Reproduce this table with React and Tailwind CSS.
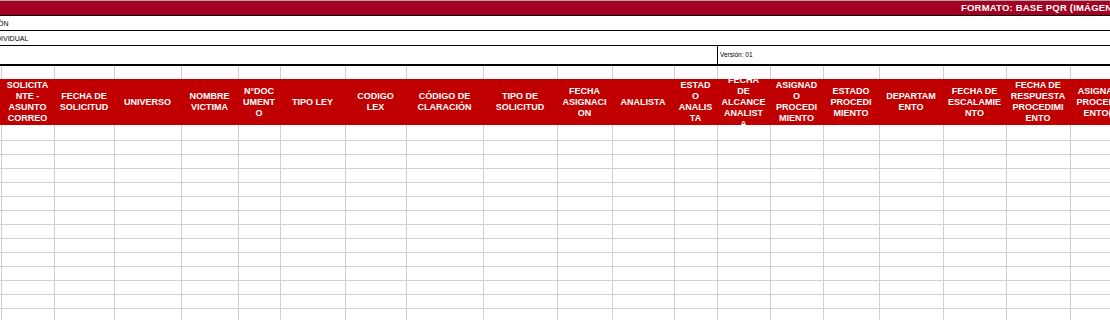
import React from 'react';

const COLS = [
  { w: 53, label: ['SOLICITA', 'NTE -', 'ASUNTO', 'CORREO'] },
  { w: 60, label: ['FECHA DE', 'SOLICITUD'] },
  { w: 67, label: ['UNIVERSO'] },
  { w: 57, label: ['NOMBRE', 'VICTIMA'] },
  { w: 42, label: ['N°DOC', 'UMENT', 'O'] },
  { w: 65, label: ['TIPO LEY'] },
  { w: 61, label: ['CODIGO', 'LEX'] },
  { w: 77, label: ['CÓDIGO DE', 'CLARACIÓN'] },
  { w: 74, label: ['TIPO DE', 'SOLICITUD'] },
  { w: 55, label: ['FECHA', 'ASIGNACI', 'ON'] },
  { w: 62, label: ['ANALISTA'] },
  { w: 43, label: ['ESTAD', 'O', 'ANALIS', 'TA'] },
  { w: 53, label: ['FECHA', 'DE', 'ALCANCE', 'ANALIST', 'A'] },
  { w: 53, label: ['ASIGNAD', 'O', 'PROCEDI', 'MIENTO'] },
  { w: 56, label: ['ESTADO', 'PROCEDI', 'MIENTO'] },
  { w: 64, label: ['DEPARTAM', 'ENTO'] },
  { w: 63, label: ['FECHA DE', 'ESCALAMIE', 'NTO'] },
  { w: 64, label: ['FECHA DE', 'RESPUESTA', 'PROCEDIMI', 'ENTO'] },
  { w: 64, label: ['ASIGNADO', 'PROCEDIMI', 'ENTO(S)'] },
];

const BODY_ROWS = 14;

function GridRow({ height }) {
  return (
    <div className="flex shrink-0 border-b border-[#d0d0d0]" style={{ height }}>
      <div className="w-px shrink-0" />
      {COLS.map((c, i) => (
        <div key={i} className="shrink-0 border-l border-[#d0d0d0]" style={{ width: c.w }} />
      ))}
    </div>
  );
}

export default function App() {
  return (
    <div className="w-[1110px] h-[320px] overflow-hidden bg-white font-['Liberation_Sans',Arial,sans-serif] flex flex-col">
      {/* top gray edge */}
      <div className="h-px bg-[#a6a6a6] shrink-0" />

      {/* title bar */}
      <div className="h-[14px] bg-[#a50021] shrink-0 flex items-center pl-[961px] whitespace-nowrap">
        <span className="text-[9.5px] leading-none font-bold text-white tracking-[0.2px]">FORMATO: BASE PQR (IMÁGEN CORPORATIVA)</span>
      </div>
      <div className="h-px bg-black shrink-0" />

      <div className="h-[14px] shrink-0 flex items-center whitespace-nowrap overflow-hidden">
        <span className="text-[7px] leading-none text-black -ml-[2px]">ÓN</span>
      </div>
      <div className="h-px bg-black shrink-0" />

      <div className="h-[14px] shrink-0 flex items-center whitespace-nowrap overflow-hidden">
        <span className="text-[7px] leading-none text-black -ml-[4px]">DIVIDUAL</span>
      </div>
      <div className="h-px bg-black shrink-0" />

      <div className="h-[18px] shrink-0 flex">
        <div className="w-[717px] shrink-0" />
        <div className="flex-1 border-l border-black flex items-center pl-[2px] whitespace-nowrap">
          <span className="text-[6.5px] leading-none text-black">Versión: 01</span>
        </div>
      </div>
      <div className="h-[2px] bg-black shrink-0" />

      {/* blank row */}
      <div className="flex shrink-0 h-[13px]">
        <div className="w-px shrink-0" />
        {COLS.map((c, i) => (
          <div key={i} className="shrink-0 border-l border-[#d0d0d0]" style={{ width: c.w }} />
        ))}
      </div>

      {/* header */}
      <div className="flex shrink-0 h-[46px] bg-[#c00000]">
        <div className="w-px shrink-0" />
        {COLS.map((c, i) => (
          <div
            key={i}
            className="shrink-0 h-full overflow-hidden flex flex-col items-center justify-center text-center text-white font-bold text-[9px] leading-[11px] whitespace-nowrap"
            style={{ width: c.w }}
          >
            {c.label.map((l, j) => (
              <span key={j} className="block">{l}</span>
            ))}
          </div>
        ))}
      </div>

      {/* body */}
      <GridRow height={16} />
      {Array.from({ length: BODY_ROWS }).map((_, i) => (
        <GridRow key={i} height={14} />
      ))}
    </div>
  );
}
